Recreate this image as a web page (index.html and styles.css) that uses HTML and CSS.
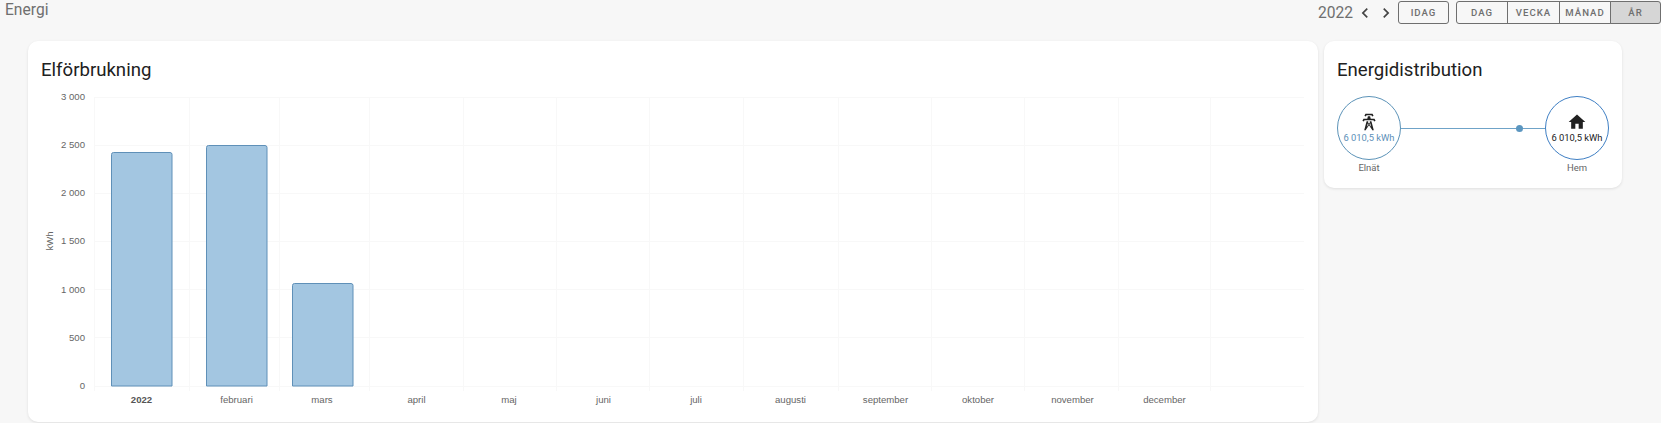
FILE: index.html
```html
<!DOCTYPE html>
<html lang="sv">
<head>
<meta charset="utf-8">
<title>Energi</title>
<link rel="stylesheet" href="styles.css">
</head>
<body>
<header class="toolbar">
  <div class="page-title">Energi</div>
  <div class="controls">
    <span class="year">2022</span>
    <button class="nav" aria-label="Föregående"><svg viewBox="0 0 24 24" class="chev"><path d="M15.41 16.58 10.83 12l4.58-4.59L14 6l-6 6 6 6z"/></svg></button>
    <button class="nav" aria-label="Nästa"><svg viewBox="0 0 24 24" class="chev"><path d="M8.59 16.58 13.17 12 8.59 7.41 10 6l6 6-6 6z"/></svg></button>
    <button class="btn today">IDAG</button>
    <div class="group">
      <button class="btn seg seg-dag">DAG</button>
      <button class="btn seg seg-vecka">VECKA</button>
      <button class="btn seg seg-manad">MÅNAD</button>
      <button class="btn seg seg-ar active">ÅR</button>
    </div>
  </div>
</header>
<main class="cards">
  <section class="card chart-card">
    <h2 class="card-title">Elförbrukning</h2>
    <svg class="chart" width="1290" height="332" viewBox="28 90 1290 332">
      <g class="grid">
        <path d="M94 97.500H1304M94 145.500H1304M94 193.500H1304M94 241.500H1304M94 289.500H1304M94 337.500H1304M94 386.500H1304"/>
        <path d="M94.500 97V391M189.500 97V391M279.500 97V391M369.500 97V391M463.500 97V391M556.500 97V391M649.500 97V391M743.500 97V391M838.500 97V391M931.500 97V391M1024.500 97V391M1118.500 97V391M1210.500 97V391"/>
      </g>
      <g class="bars">
        <path d="M111.500 386V154.500a2 2 0 0 1 2-2H170a2 2 0 0 1 2 2V386z"/>
        <path d="M206.500 386V147.500a2 2 0 0 1 2-2H265a2 2 0 0 1 2 2V386z"/>
        <path d="M292.500 386V285.500a2 2 0 0 1 2-2H351a2 2 0 0 1 2 2V386z"/>
      </g>
      <g class="y-ticks">
        <text x="85" y="100">3 000</text>
        <text x="85" y="148">2 500</text>
        <text x="85" y="196">2 000</text>
        <text x="85" y="244">1 500</text>
        <text x="85" y="293">1 000</text>
        <text x="85" y="341">500</text>
        <text x="85" y="389">0</text>
      </g>
      <text class="y-label" transform="translate(53 241) rotate(-90)">kWh</text>
      <g class="x-ticks">
        <text class="strong" x="141.500" y="403">2022</text>
        <text x="236.500" y="403">februari</text>
        <text x="322" y="403">mars</text>
        <text x="416.500" y="403">april</text>
        <text x="509" y="403">maj</text>
        <text x="603.500" y="403">juni</text>
        <text x="696" y="403">juli</text>
        <text x="790.500" y="403">augusti</text>
        <text x="885.500" y="403">september</text>
        <text x="978" y="403">oktober</text>
        <text x="1072.500" y="403">november</text>
        <text x="1164.500" y="403">december</text>
      </g>
    </svg>
  </section>
  <section class="card dist-card">
    <h2 class="card-title">Energidistribution</h2>
    <div class="flow">
      <div class="node">
        <div class="circle grid-node">
          <svg viewBox="0 0 24 24" class="node-icon"><path d="M8.280 5.450 6.500 4.550 7.760 2H16.230L17.500 4.550 15.720 5.440 15 4H9L8.280 5.450M18.620 8H14.090L13.300 5H10.700L9.910 8H5.380L4.100 10.550 5.890 11.440 6.620 10H17.380L18.100 11.450 19.890 10.560 18.620 8M17.770 22H15.700L15.460 21.100 12 15.900 8.530 21.100 8.300 22H6.230L9.120 11H11.190L10.830 12.350 12 14.100 13.160 12.350 12.810 11H14.880L17.770 22M11.400 15 10.500 13.650 9.320 18.130 11.400 15M14.680 18.120 13.500 13.640 12.600 15 14.680 18.120Z"/></svg>
          <span class="node-value">6 010,5 kWh</span>
        </div>
        <span class="node-label">Elnät</span>
      </div>
      <div class="link"><span class="dot"></span></div>
      <div class="node">
        <div class="circle home-node">
          <svg viewBox="0 0 24 24" class="node-icon"><path d="M10 20v-6h4v6h5v-8h3L12 3 2 12h3v8z"/></svg>
          <span class="node-value">6 010,5 kWh</span>
        </div>
        <span class="node-label">Hem</span>
      </div>
    </div>
  </section>
</main>
</body>
</html>
```

FILE: styles.css
```css
* { box-sizing: border-box; }
html, body { margin: 0; padding: 0; }
body {
  width: 1661px;
  height: 423px;
  overflow: hidden;
  background: #f7f7f7;
  font-family: Roboto, "Liberation Sans", sans-serif;
  color: #212121;
}
.toolbar {
  display: flex;
  justify-content: space-between;
  align-items: flex-start;
  height: 41px;
  padding: 1px 0 0 5px;
}
.page-title {
  font-size: 15.600px;
  line-height: 19px;
  color: #6f6f6f;
}
.controls { display: flex; align-items: center; height: 23px; }
.year { font-size: 15.600px; color: #6f6f6f; margin-right: 1px; }
.nav {
  width: 21px;
  height: 23px;
  padding: 0;
  margin: 0;
  border: 0;
  background: none;
  display: flex;
  align-items: center;
  justify-content: flex-end;
}
.chev { width: 20px; height: 20px; fill: #444; }
.btn {
  height: 23px;
  padding: 0;
  font-family: Roboto, sans-serif;
  font-size: 9.600px;
  font-weight: 500;
  letter-spacing: 1px;
  color: #6f6f6f;
  background: transparent;
  border: 1px solid #6f6f6f;
}
.today { width: 51px; border-radius: 3px; margin: 0 7px 0 2px; }
.group { display: flex; }
.seg { margin-left: -1px; }
.seg-dag { margin-left: 0; border-radius: 3px 0 0 3px; width: 52px; }
.seg-vecka { width: 53px; }
.seg-manad { width: 52px; }
.seg-ar { width: 51px; border-radius: 0 3px 3px 0; }
.seg.active { background: #d6d6d6; }
.cards {
  display: flex;
  align-items: flex-start;
  gap: 6px;
  padding-left: 28px;
}
.card {
  background: #fff;
  border-radius: 10px;
  box-shadow: 0 1px 3px rgba(0, 0, 0, .1);
}
.chart-card { width: 1290px; height: 381px; }
.dist-card { width: 298px; height: 147px; padding: 0 13px; }
.card-title {
  margin: 0;
  font-size: 18.600px;
  font-weight: 400;
  line-height: 24px;
  padding-top: 17px;
  color: #212121;
}
.chart-card .card-title { height: 49px; padding-left: 13px; }
.dist-card .card-title { height: 55px; }
.chart { display: block; }
.grid path { fill: none; stroke: #f8f8f8; stroke-width: 1; }
.bars path { fill: #a3c6e1; stroke: #5f90b8; stroke-width: 1; }
.y-ticks text { font-size: 9.600px; fill: #666; text-anchor: end; font-family: "Liberation Sans", sans-serif; }
.x-ticks text { font-size: 9.600px; fill: #666; text-anchor: middle; font-family: "Liberation Sans", sans-serif; }
.x-ticks .strong { font-weight: 700; fill: #555; }
.y-label { font-size: 9.600px; fill: #666; text-anchor: middle; font-family: "Liberation Sans", sans-serif; }
.flow { display: flex; align-items: flex-start; }
.node { display: flex; flex-direction: column; align-items: center; width: 64px; flex: none; }
.circle {
  width: 64px;
  height: 64px;
  border-radius: 50%;
  display: flex;
  flex-direction: column;
  align-items: center;
  justify-content: center;
  border: 1px solid #5c93b8;
}
.home-node { border-color: #3f7fc4; }
.node-icon { width: 20px; height: 20px; fill: #212121; }
.node-value { font-size: 9.400px; line-height: 12px; white-space: nowrap; }
.grid-node .node-value { color: #5c8fb8; }
.node-label { font-size: 9.500px; line-height: 12px; margin-top: 2px; color: #666; }
.link {
  flex: 1;
  height: 1px;
  margin-top: 32px;
  background: #6fa3c8;
  display: flex;
  justify-content: flex-end;
  align-items: center;
  padding-right: 22px;
}
.dot { width: 7px; height: 7px; border-radius: 50%; background: #5b96c0; flex: none; }
```
